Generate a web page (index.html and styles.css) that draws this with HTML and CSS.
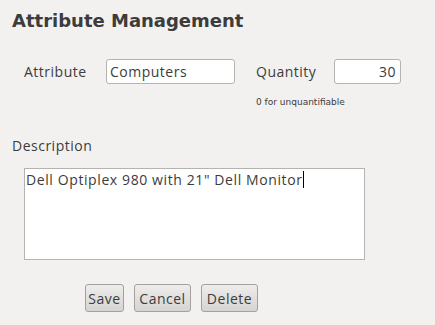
FILE: index.html
```html
<!DOCTYPE html>
<html>
<head>
    <title>Attribute Management</title>
    <link rel="stylesheet" href="styles.css">
</head>
<body>

<div class="panel">
    <h1 class="title">Attribute Management</h1>

    <div class="fields">
        <label class="field-label" for="attribute">Attribute</label>
        <input class="attr-input" type="text" id="attribute" value="Computers">
        <label class="field-label qty-label" for="quantity">Quantity</label>
        <input class="qty-input" type="text" id="quantity" value="30">
        <span class="hint">0 for unquantifiable</span>
    </div>

    <div class="desc-label">Description</div>
    <div class="desc-box">Dell Optiplex 980 with 21" Dell Monitor<span class="caret"></span></div>

    <div class="buttons">
        <button class="btn btn-save">Save</button>
        <button class="btn btn-wide">Cancel</button>
        <button class="btn btn-wide">Delete</button>
    </div>
</div>

</body>
</html>
```

FILE: styles.css
```css
body {
    margin: 0;
    background-color: #f2f1f0;
    font-family: "Open Sans", "DejaVu Sans", sans-serif;
    color: #3c3c3c;
}

.panel {
    padding: 10px 12px;
}

.title {
    font-family: "DejaVu Sans", sans-serif;
    font-size: 18px;
    font-weight: 700;
    color: #3c3c3c;
    margin: 0;
    line-height: 22px;
}

.fields {
    display: grid;
    grid-template-columns: 82px 129px 21px 78px 67px;
    grid-template-rows: 25px auto;
    align-items: center;
    margin: 27px 0 0 12px;
}

.field-label {
    font-size: 14px;
    letter-spacing: 0.5px;
}

.qty-label {
    grid-column: 4;
}

.attr-input {
    grid-column: 2;
}

.qty-input {
    grid-column: 5;
    text-align: right;
}

.attr-input,
.qty-input {
    box-sizing: border-box;
    height: 25px;
    width: 100%;
    margin: 0;
    padding: 0 4px 0 3px;
    border: 1px solid #b5b3b0;
    border-radius: 3px;
    background: #ffffff;
    font-family: "Open Sans", "DejaVu Sans", sans-serif;
    font-size: 14px;
    letter-spacing: 0.5px;
    color: #3c3c3c;
}

.hint {
    grid-column: 4 / 6;
    grid-row: 2;
    font-family: "DejaVu Sans", sans-serif;
    font-size: 9px;
    color: #3c3c3c;
    margin-top: 13px;
}

.desc-label {
    font-size: 14px;
    letter-spacing: 0.5px;
    margin-top: 29px;
    line-height: 20px;
}

.desc-box {
    box-sizing: border-box;
    width: 341px;
    height: 92px;
    margin: 12px 0 0 12px;
    padding: 2px 1px;
    border: 1px solid #b5b3b0;
    background: #ffffff;
    font-size: 14px;
    letter-spacing: 0.6px;
    line-height: 18px;
}

.caret {
    display: inline-block;
    width: 1px;
    height: 17px;
    background: #000000;
    vertical-align: -3px;
}

.buttons {
    display: flex;
    gap: 10px;
    margin: 24px 0 0 73px;
}

.btn {
    box-sizing: border-box;
    height: 28px;
    padding: 0;
    border: 1px solid #a3a19e;
    border-radius: 3px;
    background: linear-gradient(#eeedec, #d6d4d2);
    font-family: "Open Sans", "DejaVu Sans", sans-serif;
    font-size: 14px;
    letter-spacing: 0.5px;
    color: #3c3c3c;
}

.btn-save {
    width: 39px;
}

.btn-wide {
    width: 57px;
}
```
